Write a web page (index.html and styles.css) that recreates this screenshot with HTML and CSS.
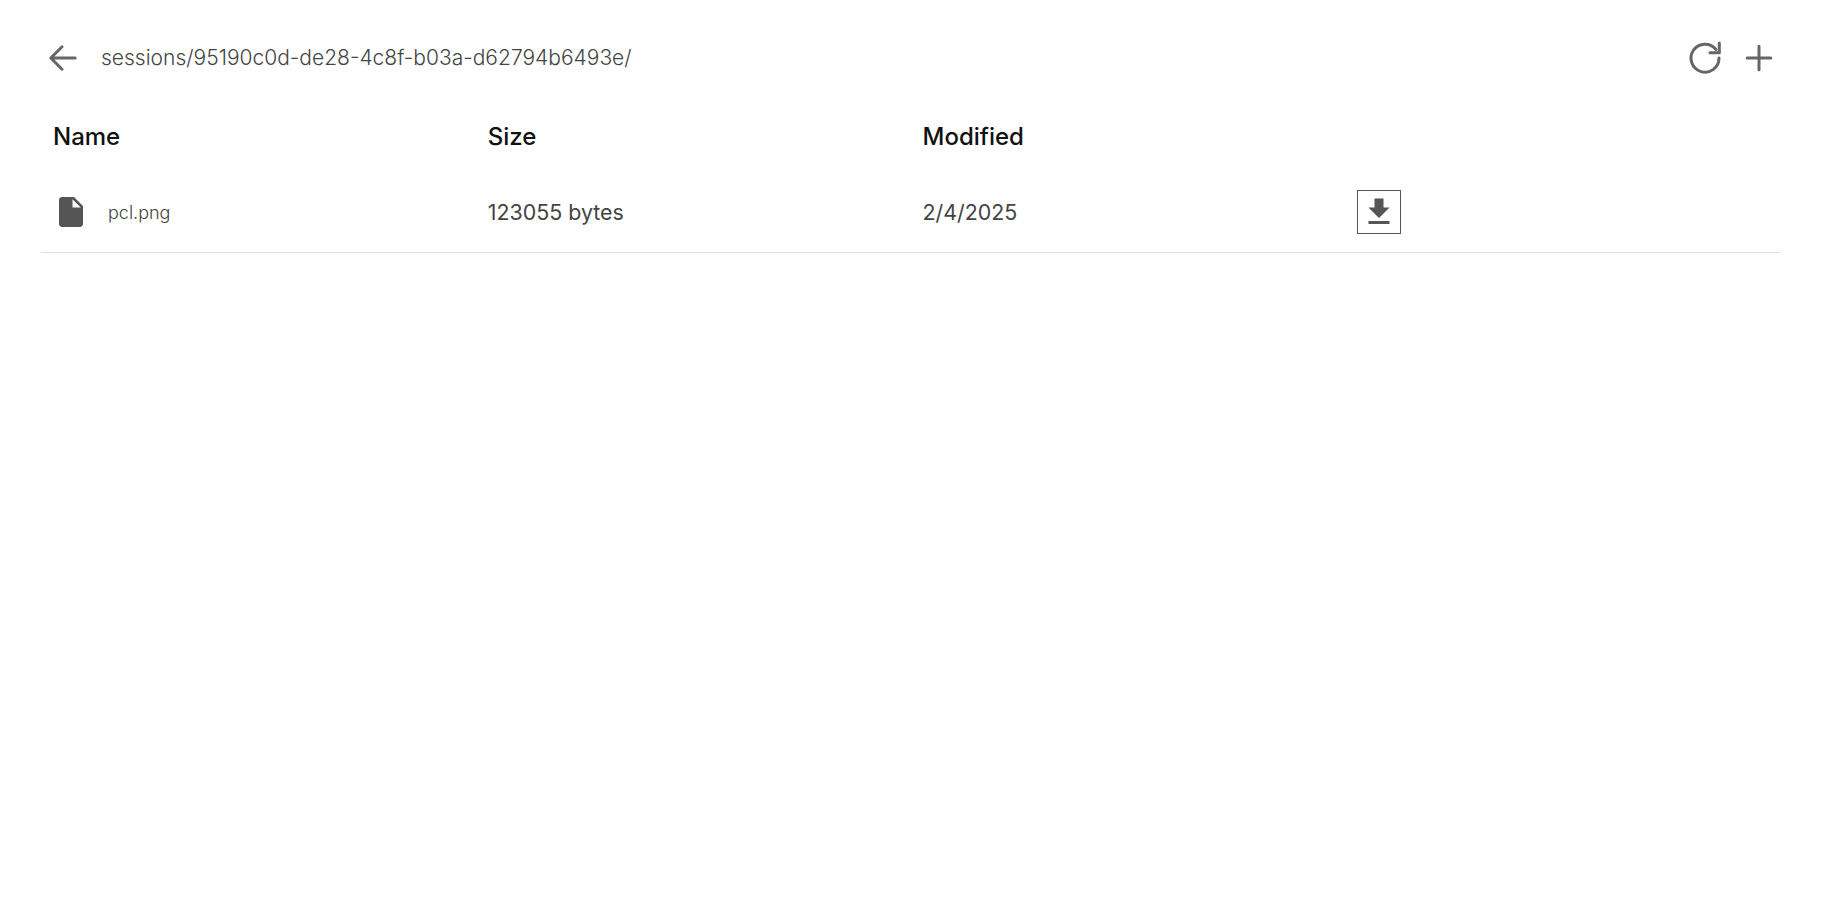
FILE: index.html
```html
<!DOCTYPE html>
<html lang="en">
<head>
<meta charset="utf-8">
<title>Files</title>
<link rel="stylesheet" href="styles.css">
</head>
<body>
<main class="page">
  <header class="toolbar">
    <div class="crumb">
      <button class="icon-btn back" aria-label="Back">
        <svg class="ico ico-back" viewBox="0 0 512 512"><path d="M244 400L100 256l144-144M120 256h292"/></svg>
      </button>
      <span class="path">sessions/95190c0d-de28-4c8f-b03a-d62794b6493e/</span>
    </div>
    <div class="actions">
      <button class="icon-btn" aria-label="Refresh">
        <svg class="ico" viewBox="0 0 48 48"><path d="M35 15.500A14 14 0 1 0 38 24"/><path d="M38.300 9v9.700H29"/></svg>
      </button>
      <button class="icon-btn add" aria-label="Add">
        <svg class="ico ico-add" viewBox="0 0 512 512"><path d="M256 112v288M400 256H112"/></svg>
      </button>
    </div>
  </header>
  <section class="table">
    <div class="row head">
      <div class="cell">Name</div>
      <div class="cell">Size</div>
      <div class="cell">Modified</div>
      <div class="cell"></div>
    </div>
    <div class="row item">
      <div class="cell name">
        <svg class="file" viewBox="0 0 24 24"><path d="M6 2c-1.100 0-2 .9-2 2v16c0 1.100.9 2 2 2h12c1.100 0 2-.9 2-2V8l-6-6H6zm7 7V3.500L18.500 9H13z"/></svg>
        <span class="fname">pcl.png</span>
      </div>
      <div class="cell">123055 bytes</div>
      <div class="cell">2/4/2025</div>
      <div class="cell">
        <button class="dl" aria-label="Download">
          <svg class="dl-ico" viewBox="0 0 24 24"><path d="M19 9h-4V3H9v6H5l7 7 7-7zM5 18v2h14v-2H5z"/></svg>
        </button>
      </div>
    </div>
  </section>
</main>
</body>
</html>
```

FILE: styles.css
```css
* { box-sizing: border-box; }
html, body { margin: 0; height: 100%; background: #fff; }
body { font-family: Inter, "Noto Sans", sans-serif; color: #555; }
.page { padding: 34px 47px 0 41px; }
.toolbar { display: flex; align-items: center; justify-content: space-between; height: 48px; }
.crumb { display: flex; align-items: center; gap: 16px; }
.actions { display: flex; align-items: center; gap: 8px; }
.icon-btn { display: flex; align-items: center; justify-content: center; width: 48px; height: 48px; padding: 0; border: 0; background: none; }
.icon-btn.back { width: 44px; }
.icon-btn.add { width: 44px; }
.ico { flex: none; width: 48px; height: 48px; fill: none; stroke: #666; stroke-linecap: round; stroke-linejoin: round; }
.ico-back { width: 40px; height: 40px; }
.ico-add { width: 42px; height: 42px; }
.ico path { stroke-width: 3px; vector-effect: non-scaling-stroke; }
.path { font-size: 21px; font-weight: 300; color: #444; white-space: nowrap; line-height: 48px; }
.table { margin-top: 19px; }
.row { display: grid; grid-template-columns: repeat(4, 1fr); align-items: center; width: 1739px; }
.cell { padding: 0 12px; }
.head { height: 71px; font-size: 24px; font-weight: 500; color: #111; }
.item { height: 81px; border-bottom: 1px solid #e0e0e0; font-size: 21.400px; font-weight: 400; color: #444; }
.name { display: flex; align-items: center; gap: 19px; }
.file { width: 36px; height: 36px; fill: #555; flex: none; }
.fname { font-size: 18px; font-weight: 300; color: #444; }
.dl { display: flex; width: 44px; height: 44px; padding: 3px; border: 1px solid #555; background: none; }
.dl-ico { width: 36px; height: 36px; fill: #555; flex: none; }
```
